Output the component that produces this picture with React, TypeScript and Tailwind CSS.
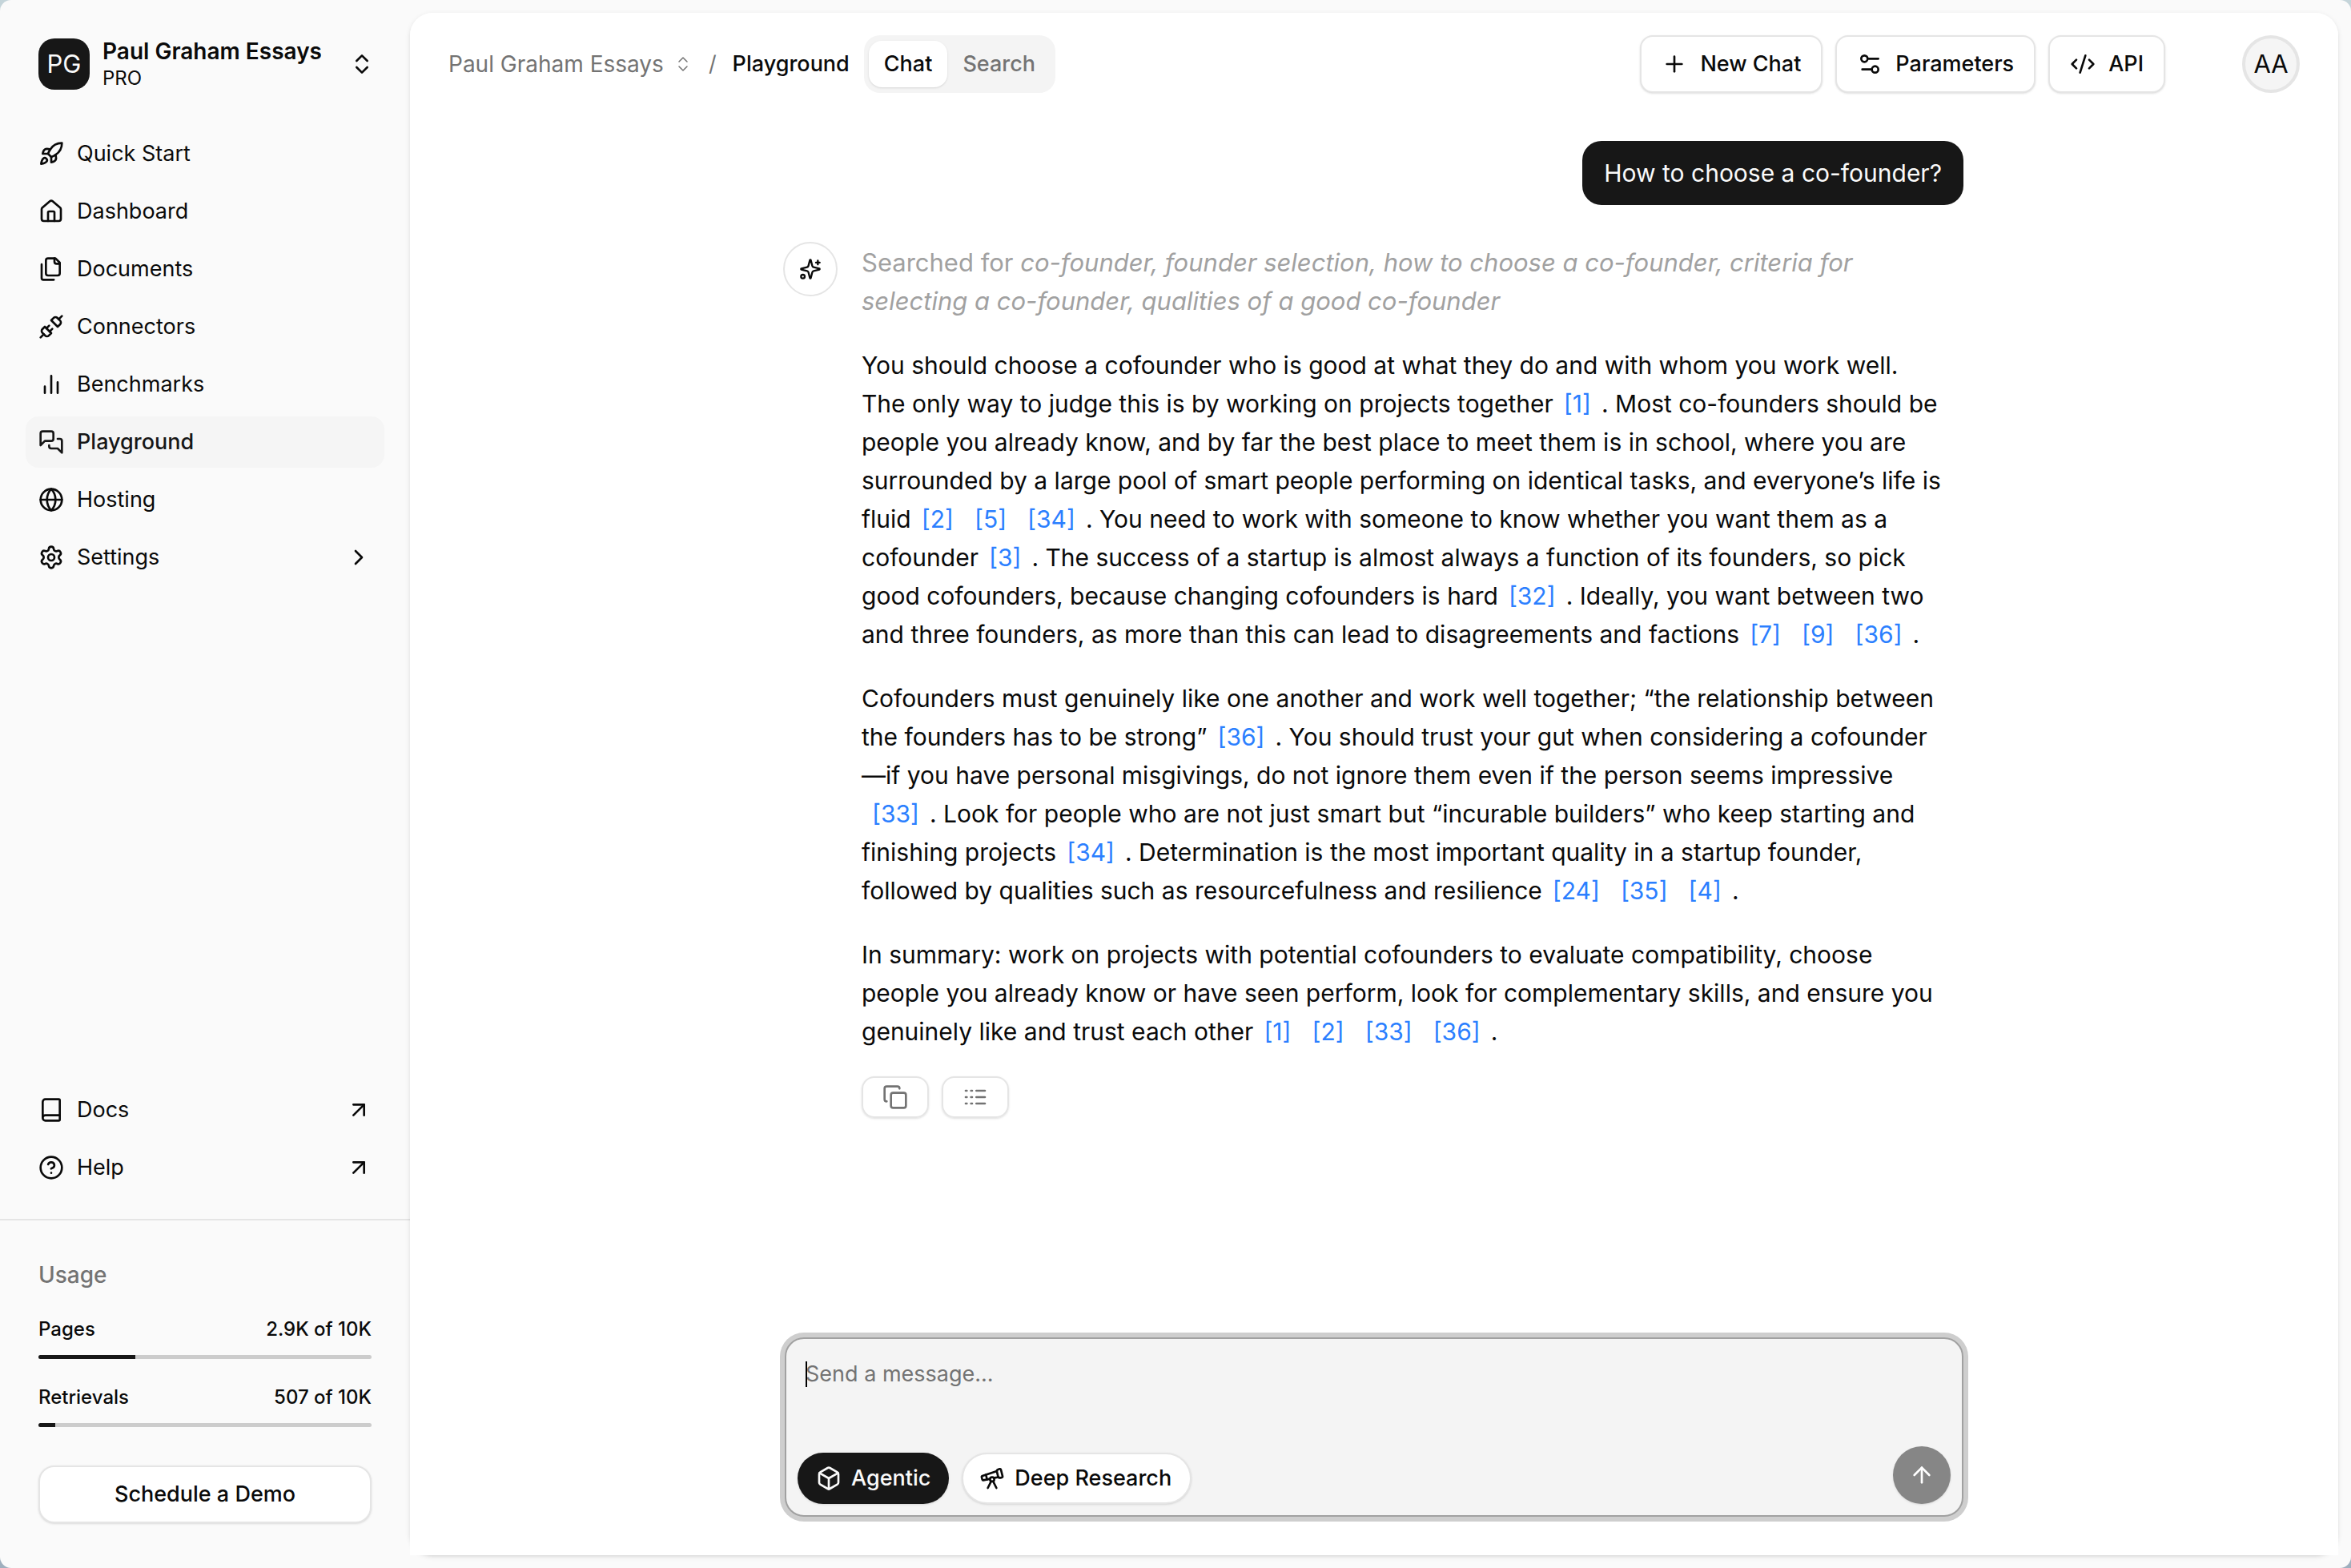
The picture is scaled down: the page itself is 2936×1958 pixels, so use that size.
import React from "react";
import {
  ArrowUp,
  ArrowUpRight,
  ChevronRight,
  ChevronsUpDown,
  CircleHelp,
  CodeXml,
  Copy,
  Globe,
  Plus,
  Rocket,
  Settings,
  Telescope,
  Unplug,
} from "lucide-react";

function Icon({ children, className = "size-8" }: { children: React.ReactNode; className?: string }) {
  return (
    <svg
      viewBox="0 0 24 24"
      fill="none"
      stroke="currentColor"
      strokeWidth={2}
      strokeLinecap="round"
      strokeLinejoin="round"
      aria-hidden="true"
      className={className + " shrink-0"}
    >
      {children}
    </svg>
  );
}

const HomeIcon = () => (
  <Icon>
    <path d="M15 21v-8a1 1 0 0 0-1-1h-4a1 1 0 0 0-1 1v8" />
    <path d="M3 10a2 2 0 0 1 .709-1.528l7-5.999a2 2 0 0 1 2.582 0l7 5.999A2 2 0 0 1 21 10v9a2 2 0 0 1-2 2H5a2 2 0 0 1-2-2z" />
  </Icon>
);
const FilesIcon = () => (
  <Icon>
    <path d="M20 7h-3a2 2 0 0 1-2-2V2" />
    <path d="M9 18a2 2 0 0 1-2-2V4a2 2 0 0 1 2-2h7l4 4v10a2 2 0 0 1-2 2Z" />
    <path d="M3 7.6v12.8A1.6 1.6 0 0 0 4.6 22h9.8" />
  </Icon>
);
const BarsIcon = () => (
  <Icon>
    <path d="M18 20V10M12 20V4M6 20v-6" />
  </Icon>
);
const MessagesIcon = () => (
  <Icon>
    <path d="M14 9a2 2 0 0 1-2 2H6l-4 4V4a2 2 0 0 1 2-2h8a2 2 0 0 1 2 2z" />
    <path d="M18 9h2a2 2 0 0 1 2 2v11l-4-4h-6a2 2 0 0 1-2-2v-1" />
  </Icon>
);
const BookIcon = () => (
  <Icon>
    <path d="M4 19.5v-15A2.5 2.5 0 0 1 6.5 2H19a1 1 0 0 1 1 1v18a1 1 0 0 1-1 1H6.5a1 1 0 0 1 0-5H20" />
  </Icon>
);
const SlidersIcon = () => (
  <Icon>
    <path d="M20 7h-9M14 17H5" />
    <circle cx="17" cy="17" r="3" />
    <circle cx="7" cy="7" r="3" />
  </Icon>
);
const LogsIcon = () => (
  <Icon>
    <path d="M3 6h1M3 12h1M3 18h1M8 6h1M8 12h1M8 18h1M13 6h8M13 12h8M13 18h8" />
  </Icon>
);
const SparklesIcon = () => (
  <Icon className="size-7">
    <path d="M9.937 15.5A2 2 0 0 0 8.5 14.063l-6.135-1.582a.5.5 0 0 1 0-.962L8.5 9.936A2 2 0 0 0 9.937 8.5l1.582-6.135a.5.5 0 0 1 .963 0L14.063 8.5A2 2 0 0 0 15.5 9.937l6.135 1.581a.5.5 0 0 1 0 .964L15.5 14.063a2 2 0 0 0-1.437 1.437l-1.582 6.135a.5.5 0 0 1-.963 0z" />
    <path d="M20 3v4M22 5h-4" />
    <circle cx="4" cy="20" r="2" />
  </Icon>
);
const BoxIcon = () => (
  <Icon>
    <path d="M21 8a2 2 0 0 0-1-1.73l-7-4a2 2 0 0 0-2 0l-7 4A2 2 0 0 0 3 8v8a2 2 0 0 0 1 1.73l7 4a2 2 0 0 0 2 0l7-4A2 2 0 0 0 21 16Z" />
    <path d="m3.3 7 8.7 5 8.7-5M12 22V12" />
  </Icon>
);

const nav = [
  { label: "Quick Start", icon: <Rocket className="size-8" /> },
  { label: "Dashboard", icon: <HomeIcon /> },
  { label: "Documents", icon: <FilesIcon /> },
  { label: "Connectors", icon: <Unplug className="size-8" /> },
  { label: "Benchmarks", icon: <BarsIcon /> },
  { label: "Playground", icon: <MessagesIcon />, active: true },
  { label: "Hosting", icon: <Globe className="size-8" /> },
  { label: "Settings", icon: <Settings className="size-8" />, end: <ChevronRight className="size-8" /> },
];

const support = [
  { label: "Docs", icon: <BookIcon /> },
  { label: "Help", icon: <CircleHelp className="size-8" /> },
];

function NavLink({
  label,
  icon,
  end,
  active,
}: {
  label: string;
  icon: React.ReactNode;
  end?: React.ReactNode;
  active?: boolean;
}) {
  return (
    <a
      href="#"
      aria-current={active ? "page" : undefined}
      className={
        "flex h-16 items-center gap-4 rounded-2xl px-4 text-[27px] " +
        (active ? "bg-neutral-100 font-medium text-neutral-900" : "")
      }
    >
      {icon}
      <span className="grow">{label}</span>
      {end}
    </a>
  );
}

function Meter({ label, value, percent }: { label: string; value: string; percent: number }) {
  return (
    <div className="flex flex-col gap-4">
      <div className="flex justify-between text-[24px] leading-8 font-medium">
        <span>{label}</span>
        <span>{value}</span>
      </div>
      <div
        role="progressbar"
        aria-label={label}
        aria-valuenow={percent}
        className="h-[5px] overflow-hidden rounded-full bg-[#cccccc]"
      >
        <div className="h-full bg-neutral-900" style={{ width: `${percent}%` }} />
      </div>
    </div>
  );
}

function Sidebar() {
  return (
    <aside className="flex w-[512px] shrink-0 flex-col">
      <button type="button" className="mx-8 mt-8 flex h-24 items-center gap-4 pr-3 pl-4 text-left">
        <span className="flex size-16 items-center justify-center rounded-[20px] bg-neutral-900 text-[31px] text-neutral-50">
          PG
        </span>
        <span className="flex grow flex-col">
          <span className="text-[28px] leading-9 font-semibold">Paul Graham Essays</span>
          <span className="text-[24px] leading-8">PRO</span>
        </span>
        <ChevronsUpDown className="size-8 shrink-0" />
      </button>
      <nav className="mt-8 flex grow flex-col gap-2 px-8">
        {nav.map((n) => (
          <NavLink key={n.label} {...n} />
        ))}
      </nav>
      <nav className="flex flex-col gap-2 px-8 pb-8">
        {support.map((n) => (
          <NavLink key={n.label} {...n} end={<ArrowUpRight className="size-8" />} />
        ))}
      </nav>
      <section className="flex flex-col border-t-2 border-neutral-200 px-12 pt-12 pb-14">
        <h2 className="text-[28px] leading-10 font-medium text-neutral-500">Usage</h2>
        <div className="mt-8 flex flex-col gap-8">
          <Meter label="Pages" value="2.9K of 10K" percent={29} />
          <Meter label="Retrievals" value="507 of 10K" percent={5} />
        </div>
        <button
          type="button"
          className="mt-12 h-[72px] rounded-[20px] border-2 border-neutral-200 bg-white text-[27px] font-medium shadow-sm"
        >
          Schedule a Demo
        </button>
      </section>
    </aside>
  );
}

function HeaderButton({ icon, children }: { icon: React.ReactNode; children: React.ReactNode }) {
  return (
    <button
      type="button"
      className="flex h-[72px] items-center gap-4 rounded-2xl border-2 border-neutral-200 bg-white px-[25px] text-[27px] font-medium shadow-sm"
    >
      {icon}
      {children}
    </button>
  );
}

function Header() {
  return (
    <header className="flex items-center px-12 pt-7 text-[27px]">
      <nav aria-label="Breadcrumb" className="flex items-center">
        <button type="button" className="flex items-center gap-3 text-[28px] text-neutral-500">
          Paul Graham Essays
          <ChevronsUpDown className="size-6" strokeWidth={1.5} />
        </button>
        <span className="mx-5 text-neutral-500">/</span>
        <span className="font-medium">Playground</span>
      </nav>
      <div role="tablist" className="ml-[18px] flex h-[72px] items-center rounded-[20px] bg-[#f4f4f4] p-[6px] font-medium">
        <button
          type="button"
          role="tab"
          aria-selected="true"
          className="h-[58px] rounded-2xl bg-white px-[19px] shadow-sm"
        >
          Chat
        </button>
        <button type="button" role="tab" aria-selected="false" className="px-[19px] text-neutral-500">
          Search
        </button>
      </div>
      <div className="ml-auto flex items-center gap-4">
        <HeaderButton icon={<Plus className="size-8" />}>New Chat</HeaderButton>
        <HeaderButton icon={<SlidersIcon />}>Parameters</HeaderButton>
        <HeaderButton icon={<CodeXml className="size-8" />}>API</HeaderButton>
        <button
          type="button"
          aria-label="Account"
          className="ml-20 size-[72px] rounded-full border-4 border-neutral-200 bg-neutral-100 text-[31px]"
        >
          AA
        </button>
      </div>
    </header>
  );
}

function Cite({ n }: { n: number }) {
  return (
    <a href={`#source-${n}`} className="inline-block px-[13px] text-[#2b7fff]">
      [{n}]
    </a>
  );
}

function Answer() {
  return (
    <article className="mt-12 flex gap-[30px]">
      <div className="-mt-0.5 -ml-0.5 flex size-[68px] shrink-0 items-center justify-center rounded-full border-2 border-neutral-200">
        <SparklesIcon />
      </div>
      <div className="flex min-w-0 grow flex-col gap-8 text-[30px] leading-[48px]">
        <p className="text-[31px] text-[#a1a1a1]">
          Searched for{" "}
          <em>
            co-founder, founder selection, how to choose a co-founder, criteria for
            <br />
            selecting a co-founder, qualities of a good co-founder
          </em>
        </p>
        <p>
          You should choose a cofounder who is good at what they do and with whom you work well.
          <br />
          The only way to judge this is by working on projects together
          <Cite n={1} />. Most co-founders should be
          <br />
          people you already know, and by far the best place to meet them is in school, where you are
          <br />
          surrounded by a large pool of smart people performing on identical tasks, and everyone’s life is
          <br />
          fluid
          <Cite n={2} />
          <Cite n={5} />
          <Cite n={34} />. You need to work with someone to know whether you want them as a
          <br />
          cofounder
          <Cite n={3} />. The success of a startup is almost always a function of its founders, so pick
          <br />
          good cofounders, because changing cofounders is hard
          <Cite n={32} />. Ideally, you want between two
          <br />
          and three founders, as more than this can lead to disagreements and factions
          <Cite n={7} />
          <Cite n={9} />
          <Cite n={36} />.
        </p>
        <p>
          Cofounders must genuinely like one another and work well together; “the relationship between
          <br />
          the founders has to be strong”
          <Cite n={36} />. You should trust your gut when considering a cofounder
          <br />
          —if you have personal misgivings, do not ignore them even if the person seems impressive
          <br />
          <Cite n={33} />. Look for people who are not just smart but “incurable builders” who keep starting and
          <br />
          finishing projects
          <Cite n={34} />. Determination is the most important quality in a startup founder,
          <br />
          followed by qualities such as resourcefulness and resilience
          <Cite n={24} />
          <Cite n={35} />
          <Cite n={4} />.
        </p>
        <p>
          In summary: work on projects with potential cofounders to evaluate compatibility, choose
          <br />
          people you already know or have seen perform, look for complementary skills, and ensure you
          <br />
          genuinely like and trust each other
          <Cite n={1} />
          <Cite n={2} />
          <Cite n={33} />
          <Cite n={36} />.
        </p>
        <div className="flex gap-4 text-neutral-500">
          <button
            type="button"
            aria-label="Copy"
            className="flex h-[52px] w-[84px] items-center justify-center rounded-2xl border-2 border-neutral-200 shadow-sm"
          >
            <Copy className="size-8" />
          </button>
          <button
            type="button"
            aria-label="Show sources"
            className="flex h-[52px] w-[84px] items-center justify-center rounded-2xl border-2 border-neutral-200 shadow-sm"
          >
            <LogsIcon />
          </button>
        </div>
      </div>
    </article>
  );
}

function Composer() {
  return (
    <form className="relative flex h-[224px] flex-col rounded-3xl border-2 border-[#a1a1a1] bg-[#f4f4f4] px-3.5 pt-5 pb-3.5 ring-6 ring-[#cecece]">
      <textarea
        aria-label="Message"
        placeholder="Send a message..."
        className="w-full grow resize-none bg-transparent px-2.5 pt-1 text-[27px] leading-10 outline-none placeholder:text-neutral-500"
      />
      <span className="absolute top-7 left-6 h-8 w-0.5 bg-black" />
      <div className="flex items-end gap-4">
        <button
          type="button"
          aria-pressed="true"
          className="flex h-16 items-center gap-3 rounded-full bg-neutral-900 px-[23px] text-[27px] font-medium text-neutral-50 shadow-sm"
        >
          <BoxIcon />
          Agentic
        </button>
        <button
          type="button"
          aria-pressed="false"
          className="flex h-16 items-center gap-3 rounded-full border-2 border-neutral-200 bg-white pr-[23px] pl-5 text-[27px] font-medium shadow-sm"
        >
          <Telescope className="size-8" />
          Deep Research
        </button>
        <button
          type="submit"
          aria-label="Send"
          className="ml-auto flex size-[72px] items-center justify-center rounded-full bg-[#868686] text-white shadow-sm"
        >
          <ArrowUp className="size-8" />
        </button>
      </div>
    </form>
  );
}

export default function App() {
  return (
    <div className="min-h-screen bg-[linear-gradient(#c5d5da,#9fafbe)] font-['Inter',sans-serif] text-neutral-950">
      <div className="flex min-h-screen rounded-[14px] bg-[#fafafa]">
        <Sidebar />
        <div className="flex min-w-0 grow pt-4 pr-4 pb-4">
          <div className="flex min-w-0 grow rounded-[28px] shadow-[0_2px_6px_rgba(0,0,0,0.1),0_2px_4px_-2px_rgba(0,0,0,0.1)]">
            <main className="flex min-w-0 grow flex-col rounded-t-[28px] bg-white">
              <Header />
              <div className="mx-auto mt-[60px] flex w-full max-w-[1472px] grow flex-col pb-12">
                <div className="flex h-20 items-center self-end rounded-3xl bg-neutral-900 px-[27px] text-[30px] text-neutral-50">
                  How to choose a co-founder?
                </div>
                <Answer />
                <div className="mt-auto">
                  <Composer />
                </div>
              </div>
            </main>
          </div>
        </div>
      </div>
    </div>
  );
}
